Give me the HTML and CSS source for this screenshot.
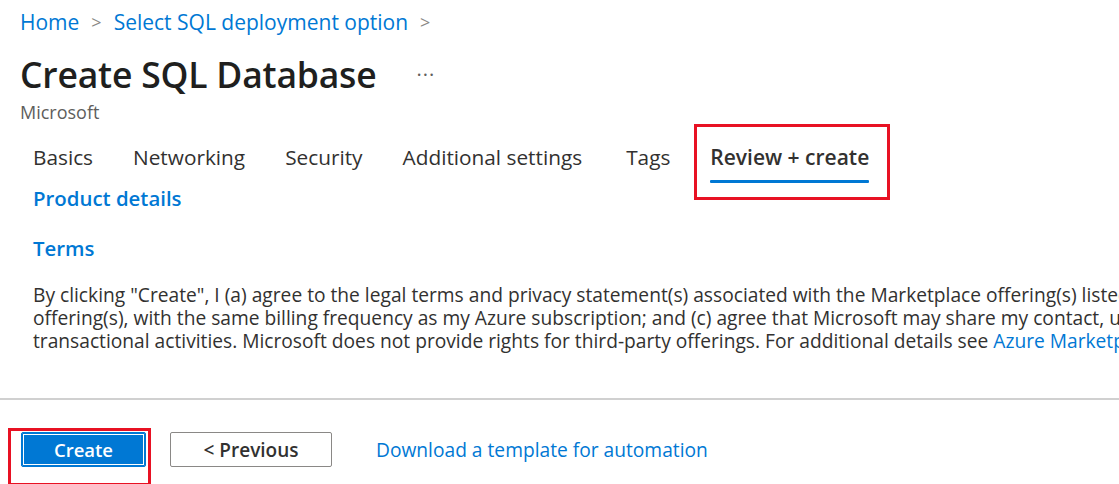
FILE: index.html
```html
<!DOCTYPE html>
<html lang="en">
<head>
<meta charset="utf-8">
<title>Create SQL Database</title>
<link rel="stylesheet" href="styles.css">
</head>
<body>
<div class="page">
  <nav class="breadcrumb">
    <a class="crumb" href="#">Home</a>
    <span class="chev">&gt;</span>
    <a class="crumb" href="#">Select SQL deployment option</a>
    <span class="chev">&gt;</span>
  </nav>
  <header class="title-row">
    <h1 class="title">Create SQL Database</h1>
    <span class="more">···</span>
  </header>
  <div class="publisher">Microsoft</div>
  <div class="tabs">
    <span class="tab">Basics</span>
    <span class="tab">Networking</span>
    <span class="tab">Security</span>
    <span class="tab">Additional settings</span>
    <span class="tab tab-tags">Tags</span>
    <span class="tab tab-active">Review + create</span>
  </div>
  <section class="content">
    <h2 class="section-head">Product details</h2>
    <h2 class="section-head terms-head">Terms</h2>
    <p class="terms">By clicking "Create", I (a) agree to the legal terms and privacy statement(s) associated with the Marketplace offering(s) listed above; (b) authorize Microsoft to bill my current payment method for the fees associated with the<br>offering(s), with the same billing frequency as my Azure subscription; and (c) agree that Microsoft may share my contact, usage and transactional information with the provider(s) of the offering(s) for support, billing and other<br>transactional activities. Microsoft does not provide rights for third-party offerings. For additional details see <a href="#" class="link">Azure Marketplace Terms</a>.</p>
  </section>
  <footer class="footer">
    <button class="btn btn-primary">Create</button>
    <button class="btn btn-secondary">&lt; Previous</button>
    <a href="#" class="link footer-link">Download a template for automation</a>
  </footer>
</div>
</body>
</html>
```
FILE: styles.css
```css
html, body {
  margin: 0;
  padding: 0;
  background: #ffffff;
  overflow: hidden;
}
body {
  font-family: "Open Sans", "Noto Sans", sans-serif;
  color: #323130;
  width: 1119px;
  height: 484px;
}
.page {
  padding-left: 20px;
}
.breadcrumb {
  display: flex;
  align-items: center;
  gap: 12px;
  height: 24px;
  padding-top: 10px;
  font-size: 21px;
}
.crumb {
  color: #0078d4;
  text-decoration: none;
}
.chev {
  color: #8a8886;
  font-size: 18px;
}
.title-row {
  display: flex;
  align-items: center;
  margin-top: 16px;
  height: 48px;
}
.title {
  margin: 0;
  font-size: 35.5px;
  font-weight: 600;
  color: #201f1e;
  letter-spacing: -0.2px;
}
.more {
  margin-left: 40px;
  color: #605e5c;
  font-size: 20px;
  letter-spacing: 1px;
}
.publisher {
  margin-top: 2px;
  font-size: 18px;
  color: #605e5c;
  height: 24px;
}
.tabs {
  display: flex;
  gap: 40px;
  padding-left: 13px;
  margin-top: 16px;
  height: 47px;
  font-size: 20.8px;
}
.tab {
  position: relative;
  height: 40px;
  line-height: 34px;
}
.tab-tags {
  margin-left: 4px;
}
.tab-active {
  font-weight: 600;
  font-size: 21px;
}
.tab-active::before {
  content: "";
  position: absolute;
  left: 0;
  right: 0;
  top: 40px;
  height: 3px;
  background: #0078d4;
  border-radius: 1px;
}
.tab-active::after {
  content: "";
  position: absolute;
  left: -16px;
  right: -21px;
  top: -16px;
  bottom: -20px;
  border: 3px solid #e81123;
}
.content {
  padding-left: 13px;
}
.section-head {
  margin: 0;
  font-size: 20.4px;
  font-weight: 600;
  color: #0078d4;
  height: 30px;
  line-height: 30px;
  margin-top: -4px;
}
.terms-head {
  margin-top: 20px;
}
.terms {
  margin: 20px 0 0;
  font-size: 19.2px;
  line-height: 23px;
  white-space: nowrap;
}
.link {
  color: #0078d4;
  text-decoration: none;
}
.footer {
  display: flex;
  align-items: center;
  gap: 24px;
  margin-left: -20px;
  margin-top: 46px;
  border-top: 2px solid #d0d0d0;
  padding: 32px 0 0 21px;
}
.btn {
  font-family: inherit;
  height: 35px;
  border-radius: 2px;
  margin: 0;
  cursor: pointer;
  padding: 0;
}
.btn-primary {
  position: relative;
  width: 125px;
  background: #0078d4;
  color: #ffffff;
  font-weight: 600;
  font-size: 18.5px;
  border: 1px solid #0078d4;
  box-shadow: inset 0 0 0 1px #0078d4, inset 0 0 0 2px #ffffff;
}
.btn-primary::after {
  content: "";
  position: absolute;
  left: -14px;
  right: -6px;
  top: -5px;
  bottom: -20px;
  border: 3px solid #e81123;
}
.btn-secondary {
  width: 162px;
  background: #ffffff;
  color: #323130;
  border: 1px solid #8a8886;
  font-weight: 600;
  font-size: 19px;
}
.footer-link {
  margin-left: 20px;
  font-size: 19.2px;
}
```
